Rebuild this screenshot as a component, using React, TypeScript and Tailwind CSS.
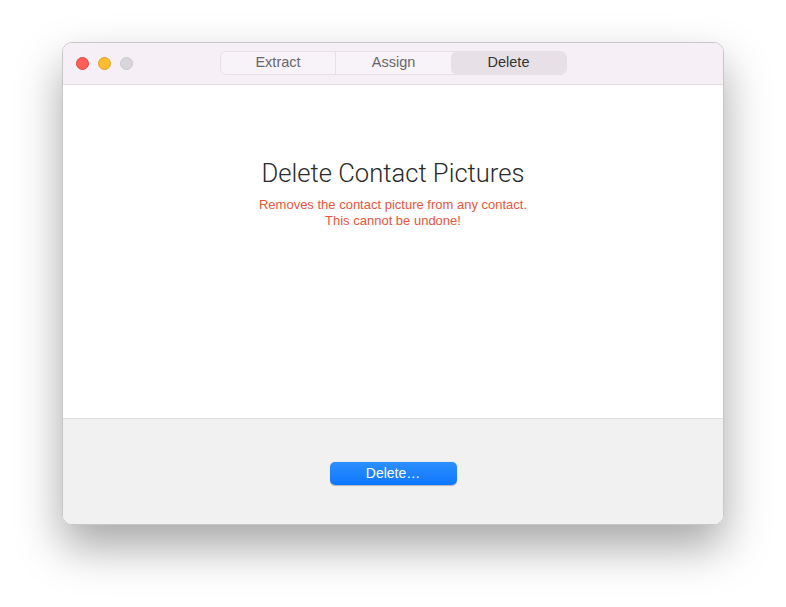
import React from 'react';

const tabs = ['Extract', 'Assign', 'Delete'];

export default function App() {
  const active = 'Delete';

  return (
    <div className="w-[786px] h-[607px] bg-white pl-[62px] pt-[42px]" style={{ fontFamily: '"Liberation Sans", Arial, sans-serif' }}>
      <div className="w-[662px] h-[483px] flex flex-col rounded-[10px] overflow-hidden border border-[#c9c6c9] shadow-[0_22px_45px_rgba(0,0,0,0.35)]">
        {/* Title bar */}
        <div className="h-[42px] shrink-0 flex items-center bg-[#f6eff6] border-b border-[#e2dde2] relative">
          <div className="absolute left-[13px] top-[14px] flex gap-[9px]">
            <span className="w-[13px] h-[13px] rounded-full bg-[#fe5f57] border border-[#e2463f]" />
            <span className="w-[13px] h-[13px] rounded-full bg-[#febc2e] border border-[#e0a028]" />
            <span className="w-[13px] h-[13px] rounded-full bg-[#d9d6da] border border-[#cac6cb]" />
          </div>
          <div className="ml-[157px] mb-[1px] flex h-[24px] rounded-[6px] border border-[#e6e0e6] bg-[#f8f3f8]">
            {tabs.map((t, i) => (
              <div
                key={t}
                className={
                  'w-[115px] flex items-center justify-center text-[14.5px] ' +
                  (t === active ? 'bg-[#e7e1e7] rounded-[5px] text-[#333]' : 'text-[#6a666b]') +
                  (i === 0 ? ' border-r border-[#e6e0e6]' : '')
                }
              >
                {t}
              </div>
            ))}
          </div>
        </div>

        {/* Content */}
        <div className="h-[333px] shrink-0 bg-white flex flex-col items-center pt-[72px]">
          <h1 className="text-[25.6px] font-light text-[#2a2a2a] leading-[32px]" style={{ fontFamily: 'Roboto, "Liberation Sans", sans-serif' }}>
            Delete Contact Pictures
          </h1>
          <p className="mt-[8px] text-[13px] leading-[16px] text-[#e8553c] text-center">
            Removes the contact picture from any contact.
            <br />
            This cannot be undone!
          </p>
        </div>

        {/* Footer */}
        <div className="flex-1 bg-[#f1f1f1] border-t border-[#dedede] flex justify-center pt-[43px]">
          <button className="w-[127px] h-[23px] rounded-[5px] bg-gradient-to-b from-[#2d8ffe] to-[#0a76fe] text-white text-[14px] leading-[23px] shadow-[0_0.5px_1px_rgba(0,0,0,0.25)]">
            Delete…
          </button>
        </div>
      </div>
    </div>
  );
}
